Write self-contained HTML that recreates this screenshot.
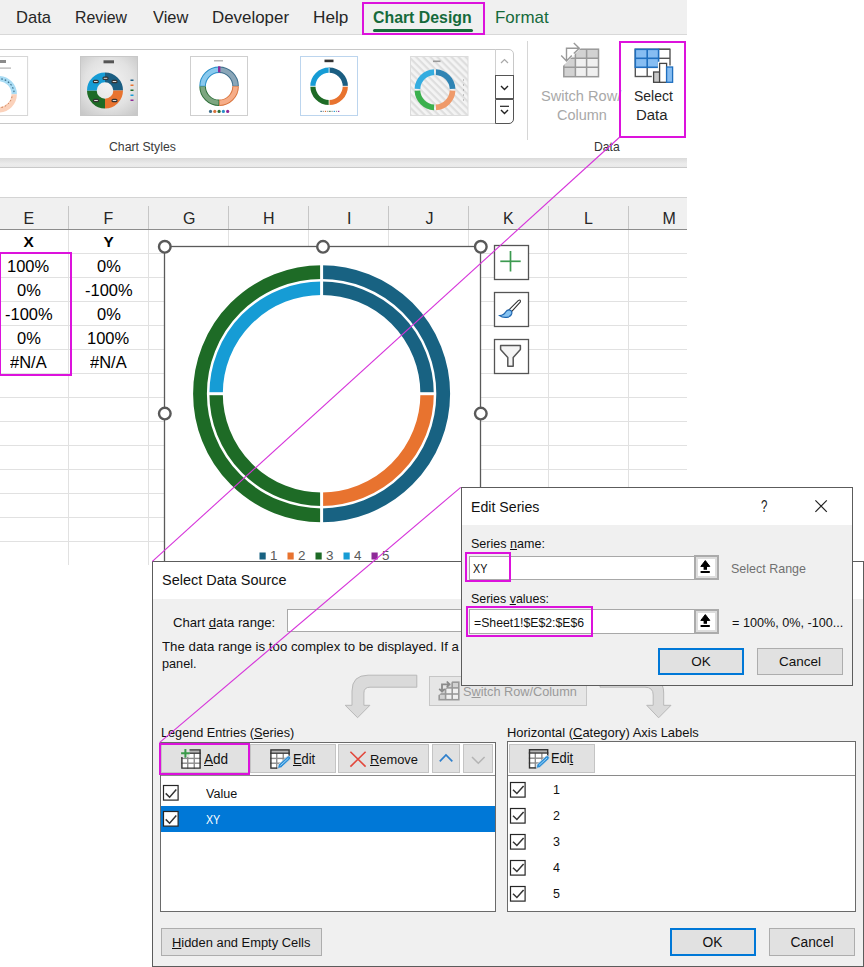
<!DOCTYPE html>
<html><head><meta charset="utf-8"><style>
html,body{margin:0;padding:0;}
body{width:864px;height:967px;overflow:hidden;position:relative;background:#fff;font-family:"Liberation Sans",sans-serif;}
.t{position:absolute;white-space:nowrap;transform-origin:0 0;}
u{text-decoration-thickness:1px;text-underline-offset:1px;}
</style></head><body>
<div style="position:absolute;left:0.00px;top:0.00px;width:687.00px;height:34.00px;background:#f0f0f0"></div>
<div style="position:absolute;left:0.00px;top:34.00px;width:687.00px;height:1.00px;background:#d8d8d8"></div>
<div class="t" style="left:15.53px;top:9.00px;font-size:17.006px;line-height:17.006px;font-weight:400;color:#262626;transform:scaleX(0.9731);">Data</div>
<div class="t" style="left:75.32px;top:9.00px;font-size:17.006px;line-height:17.006px;font-weight:400;color:#262626;transform:scaleX(0.9331);">Review</div>
<div class="t" style="left:153.00px;top:9.00px;font-size:17.006px;line-height:17.006px;font-weight:400;color:#262626;transform:scaleX(0.9661);">View</div>
<div class="t" style="left:212.31px;top:9.00px;font-size:17.006px;line-height:17.006px;font-weight:400;color:#262626;transform:scaleX(0.9944);">Developer</div>
<div class="t" style="left:313.39px;top:9.00px;font-size:17.006px;line-height:17.006px;font-weight:400;color:#262626;transform:scaleX(1.0117);">Help</div>
<div class="t" style="left:373.30px;top:9.00px;font-size:17.006px;line-height:17.006px;font-weight:700;color:#156a3b;transform:scaleX(0.9326);">Chart Design</div>
<div class="t" style="left:494.60px;top:9.00px;font-size:17.006px;line-height:17.006px;font-weight:400;color:#156a3b;transform:scaleX(0.9959);">Format</div>
<div style="position:absolute;left:372.80px;top:28.80px;width:100.60px;height:3.00px;background:#156a3b;border-radius:2px"></div>
<div style="position:absolute;left:0.00px;top:35.00px;width:687.00px;height:123.00px;background:#fff"></div>
<div style="position:absolute;left:-5.00px;top:49.00px;width:518.50px;height:75.00px;border:1px solid #c8c8c8;border-radius:0 5px 5px 0;box-sizing:border-box"></div>
<div style="position:absolute;left:495.00px;top:49.00px;width:1.00px;height:75.00px;background:#d0d0d0"></div>
<div style="position:absolute;left:495.00px;top:75.00px;width:18.50px;height:24.00px;border:1px solid #555;box-sizing:border-box;background:#fff"></div>
<div style="position:absolute;left:495.00px;top:98.50px;width:18.50px;height:25.50px;border:1px solid #555;border-radius:0 0 5px 0;box-sizing:border-box;background:#fff"></div>
<svg style="position:absolute;left:495px;top:49px" width="19" height="75">
<polyline points="6,14 9.5,10.5 13,14" fill="none" stroke="#a8a8a8" stroke-width="1.2"/>
<polyline points="6,37 9.5,40.5 13,37" fill="none" stroke="#222" stroke-width="1.4"/>
<line x1="5" y1="57.3" x2="14" y2="57.3" stroke="#222" stroke-width="1.2"/>
<polyline points="6,61 9.5,64.5 13,61" fill="none" stroke="#222" stroke-width="1.4"/>
</svg>
<svg style="position:absolute;left:0;top:0" width="864" height="160">
<defs>
<radialGradient id="g2" cx="50%" cy="45%" r="70%"><stop offset="0" stop-color="#f4f4f4"/><stop offset="0.6" stop-color="#e2e2e2"/><stop offset="1" stop-color="#c8c8c8"/></radialGradient>
<pattern id="hatch" width="5" height="5" patternUnits="userSpaceOnUse" patternTransform="rotate(45)"><rect width="5" height="5" fill="#f4f4f4"/><rect width="5" height="2.2" fill="#dedede"/></pattern>
</defs>
<rect x="-3" y="56.5" width="30.6" height="59" fill="#fff" stroke="#d6d6d6" stroke-width="1"/>
<path d="M-1.40,78.60 A15.6,15.6 0 0 1 14.20,94.20" fill="none" stroke="#a9dcf4" stroke-width="5.4" />
<path d="M14.20,94.20 A15.6,15.6 0 0 1 -1.40,109.80" fill="none" stroke="#fbd2bb" stroke-width="5.4" />
<path d="M1.31,78.84 A15.6,15.6 0 0 1 14.19,93.66" fill="none" stroke="#3a6f8c" stroke-width="1.2" stroke-dasharray="1.6 2"/>
<path d="M11.99,96.56 A13.6,13.6 0 0 1 0.96,107.59" fill="none" stroke="#c8794e" stroke-width="1" stroke-dasharray="1.6 2"/>
<rect x="0" y="60" width="6" height="3" fill="#8a8a8a"/>
<rect x="0" y="67.5" width="11" height="1.2" fill="#b0b0b0"/>
<rect x="80.5" y="56.5" width="57" height="59" fill="url(#g2)" stroke="#c8c8c8" stroke-width="1"/>
<path d="M105.00,77.35 A13.15,13.15 0 0 1 118.15,90.50" fill="none" stroke="#1b5e82" stroke-width="9.7" />
<path d="M118.15,90.50 A13.15,13.15 0 0 1 105.00,103.65" fill="none" stroke="#e8732f" stroke-width="9.7" />
<path d="M105.00,103.65 A13.15,13.15 0 0 1 91.85,90.50" fill="none" stroke="#1e6b26" stroke-width="9.7" />
<path d="M91.85,90.50 A13.15,13.15 0 0 1 105.00,77.35" fill="none" stroke="#169cd5" stroke-width="9.7" />
<rect x="102.5" y="76.5" width="6" height="3.6" rx="1.6" fill="#333"/><rect x="103.7" y="77.8" width="3.6" height="1" fill="#ddd"/>
<rect x="111.5" y="79.7" width="6" height="3.6" rx="1.6" fill="#333"/><rect x="112.7" y="81.0" width="3.6" height="1" fill="#ddd"/>
<rect x="92.8" y="79.7" width="6" height="3.6" rx="1.6" fill="#333"/><rect x="94.0" y="81.0" width="3.6" height="1" fill="#ddd"/>
<rect x="93" y="98.7" width="6" height="3.6" rx="1.6" fill="#333"/><rect x="94.2" y="100.0" width="3.6" height="1" fill="#ddd"/>
<rect x="111.5" y="98.7" width="6" height="3.6" rx="1.6" fill="#333"/><rect x="112.7" y="100.0" width="3.6" height="1" fill="#ddd"/>
<rect x="103.5" y="60.3" width="10.5" height="3" fill="#555"/>
<rect x="130.5" y="79.5" width="3" height="1.5" fill="#1b5e82"/>
<rect x="130.5" y="84.5" width="3" height="1.5" fill="#e8732f"/>
<rect x="130.5" y="89.5" width="3" height="1.5" fill="#1e6b26"/>
<rect x="130.5" y="94.5" width="3" height="1.5" fill="#169cd5"/>
<rect x="130.5" y="99.5" width="3" height="1.5" fill="#8e2a98"/>
<rect x="190.5" y="56.5" width="57" height="59" fill="#fff" stroke="#cfcfcf" stroke-width="1"/>
<path d="M219.10,69.80 A16.5,16.5 0 0 1 235.60,86.30" fill="none" stroke="#3f6f8c" stroke-width="6.6" />
<path d="M219.68,69.81 A16.5,16.5 0 0 1 235.59,85.72" fill="none" stroke="#8aa6b8" stroke-width="4.6" />
<path d="M235.60,86.30 A16.5,16.5 0 0 1 219.10,102.80" fill="none" stroke="#d8733c" stroke-width="6.6" />
<path d="M235.59,86.88 A16.5,16.5 0 0 1 219.68,102.79" fill="none" stroke="#f6ad88" stroke-width="4.6" />
<path d="M219.10,102.80 A16.5,16.5 0 0 1 202.60,86.30" fill="none" stroke="#2f6f3a" stroke-width="6.6" />
<path d="M218.52,102.79 A16.5,16.5 0 0 1 202.61,86.88" fill="none" stroke="#7da680" stroke-width="4.6" />
<path d="M202.60,86.30 A16.5,16.5 0 0 1 219.10,69.80" fill="none" stroke="#2a8fc8" stroke-width="6.6" />
<path d="M202.61,85.72 A16.5,16.5 0 0 1 218.52,69.81" fill="none" stroke="#89c9ee" stroke-width="4.6" />
<rect x="218" y="66.3" width="2.4" height="6" fill="#8e2a98"/>
<rect x="214" y="60" width="9" height="1.5" fill="#b8b8b8"/>
<circle cx="210.5" cy="111.4" r="1.6" fill="#3f6f8c"/>
<circle cx="214.8" cy="111.4" r="1.6" fill="#d8733c"/>
<circle cx="219.1" cy="111.4" r="1.6" fill="#2f6f3a"/>
<circle cx="223.4" cy="111.4" r="1.6" fill="#2a8fc8"/>
<circle cx="227.7" cy="111.4" r="1.6" fill="#8e2a98"/>
<rect x="300.5" y="56.5" width="57" height="59" fill="#fff" stroke="#bcd5ee" stroke-width="1"/>
<path d="M329.10,70.10 A16.2,16.2 0 0 1 345.30,86.30" fill="none" stroke="#1b5e82" stroke-width="5.2" />
<path d="M345.30,86.30 A16.2,16.2 0 0 1 329.10,102.50" fill="none" stroke="#e8732f" stroke-width="5.2" />
<path d="M329.10,102.50 A16.2,16.2 0 0 1 312.90,86.30" fill="none" stroke="#1e6b26" stroke-width="5.2" />
<path d="M312.90,86.30 A16.2,16.2 0 0 1 329.10,70.10" fill="none" stroke="#169cd5" stroke-width="5.2" />
<line x1="329.1" y1="68" x2="329.1" y2="105" stroke="#fff" stroke-width="0.8"/><line x1="310" y1="86.3" x2="348" y2="86.3" stroke="#fff" stroke-width="0.8"/>
<rect x="324.5" y="59.6" width="9" height="2.6" fill="#333"/>
<rect x="320.5" y="110.8" width="1.2" height="1.2" fill="#1b5e82"/>
<rect x="322.7" y="110.8" width="1.2" height="1.2" fill="#999"/>
<rect x="324.9" y="110.8" width="1.2" height="1.2" fill="#e8732f"/>
<rect x="327.1" y="110.8" width="1.2" height="1.2" fill="#999"/>
<rect x="329.3" y="110.8" width="1.2" height="1.2" fill="#1e6b26"/>
<rect x="331.5" y="110.8" width="1.2" height="1.2" fill="#999"/>
<rect x="333.7" y="110.8" width="1.2" height="1.2" fill="#169cd5"/>
<rect x="335.9" y="110.8" width="1.2" height="1.2" fill="#999"/>
<rect x="338.1" y="110.8" width="1.2" height="1.2" fill="#8e2a98"/>
<rect x="410.5" y="56.5" width="57.5" height="59" fill="url(#hatch)" stroke="#dcdcdc" stroke-width="1"/>
<path d="M435.92,72.22 A17.6,17.6 0 0 1 452.58,88.88" fill="none" stroke="#2f84b4" stroke-width="5.7" />
<path d="M452.58,90.72 A17.6,17.6 0 0 1 435.92,107.38" fill="none" stroke="#ef9a6a" stroke-width="5.7" />
<path d="M434.08,107.38 A17.6,17.6 0 0 1 417.42,90.72" fill="none" stroke="#3bb04d" stroke-width="5.7" />
<path d="M417.42,88.88 A17.6,17.6 0 0 1 434.08,72.22" fill="none" stroke="#35ade0" stroke-width="5.7" />
<rect x="433" y="60.5" width="7.5" height="1.6" fill="#999"/>
<rect x="463" y="79.5" width="0.8" height="1" fill="#777"/>
<rect x="463" y="84.5" width="0.8" height="1" fill="#777"/>
<rect x="463" y="89.5" width="0.8" height="1" fill="#777"/>
<rect x="463" y="94.5" width="0.8" height="1" fill="#777"/>
<rect x="463" y="99.5" width="0.8" height="1" fill="#777"/>
</svg>
<div style="position:absolute;left:527.30px;top:41.00px;width:1.00px;height:99.00px;background:#d6d6d6"></div>
<div class="t" style="left:108.50px;top:140.00px;font-size:13.663px;line-height:13.663px;font-weight:400;color:#3a3a3a;transform:scaleX(0.8988);">Chart Styles</div>
<div class="t" style="left:593.85px;top:141.00px;font-size:12.791px;line-height:12.791px;font-weight:400;color:#333;transform:scaleX(0.9520);">Data</div>
<div class="t" style="left:633.70px;top:89.00px;font-size:14.244px;line-height:14.244px;font-weight:400;color:#262626;transform:scaleX(0.9822);">Select</div>
<div class="t" style="left:636.35px;top:108.00px;font-size:14.244px;line-height:14.244px;font-weight:400;color:#262626;transform:scaleX(1.0497);">Data</div>
<div class="t" style="left:540.70px;top:89.00px;font-size:14.244px;line-height:14.244px;font-weight:400;color:#a8a8a8;transform:scaleX(1.0248);">Switch Row/</div>
<div class="t" style="left:556.90px;top:108.00px;font-size:14.244px;line-height:14.244px;font-weight:400;color:#a8a8a8;transform:scaleX(1.0180);">Column</div>
<div style="position:absolute;left:0.00px;top:158.00px;width:687.00px;height:10.00px;background:linear-gradient(#dadada,#ececec 60%,#e8e8e8)"></div>
<div style="position:absolute;left:0.00px;top:167.00px;width:687.00px;height:1.00px;background:#c9c9c9"></div>
<div style="position:absolute;left:0.00px;top:168.00px;width:687.00px;height:29.00px;background:#fff"></div>
<div style="position:absolute;left:0.00px;top:197.00px;width:687.00px;height:1.00px;background:#d4d4d4"></div>
<div style="position:absolute;left:0.00px;top:198.00px;width:687.00px;height:31.00px;background:#f0f0f0"></div>
<div style="position:absolute;left:0.00px;top:229.00px;width:687.00px;height:1.00px;background:#8c8c8c"></div>
<div style="position:absolute;left:68.00px;top:206.00px;width:1.00px;height:23.00px;background:#c6c6c6"></div>
<div style="position:absolute;left:148.00px;top:206.00px;width:1.00px;height:23.00px;background:#c6c6c6"></div>
<div style="position:absolute;left:228.00px;top:206.00px;width:1.00px;height:23.00px;background:#c6c6c6"></div>
<div style="position:absolute;left:308.00px;top:206.00px;width:1.00px;height:23.00px;background:#c6c6c6"></div>
<div style="position:absolute;left:388.00px;top:206.00px;width:1.00px;height:23.00px;background:#c6c6c6"></div>
<div style="position:absolute;left:468.00px;top:206.00px;width:1.00px;height:23.00px;background:#c6c6c6"></div>
<div style="position:absolute;left:548.00px;top:206.00px;width:1.00px;height:23.00px;background:#c6c6c6"></div>
<div style="position:absolute;left:628.00px;top:206.00px;width:1.00px;height:23.00px;background:#c6c6c6"></div>
<div class="t" style="left:23.50px;top:211.00px;font-size:15.988px;line-height:15.988px;font-weight:400;color:#262626;transform:scaleX(1.0000);">E</div>
<div class="t" style="left:103.50px;top:211.00px;font-size:15.988px;line-height:15.988px;font-weight:400;color:#262626;transform:scaleX(1.0000);">F</div>
<div class="t" style="left:183.00px;top:211.00px;font-size:15.988px;line-height:15.988px;font-weight:400;color:#262626;transform:scaleX(1.0000);">G</div>
<div class="t" style="left:263.00px;top:211.00px;font-size:15.988px;line-height:15.988px;font-weight:400;color:#262626;transform:scaleX(1.0000);">H</div>
<div class="t" style="left:347.00px;top:211.00px;font-size:15.988px;line-height:15.988px;font-weight:400;color:#262626;transform:scaleX(1.0000);">I</div>
<div class="t" style="left:425.50px;top:211.00px;font-size:15.988px;line-height:15.988px;font-weight:400;color:#262626;transform:scaleX(1.0000);">J</div>
<div class="t" style="left:503.00px;top:211.00px;font-size:15.988px;line-height:15.988px;font-weight:400;color:#262626;transform:scaleX(1.0000);">K</div>
<div class="t" style="left:584.00px;top:211.00px;font-size:15.988px;line-height:15.988px;font-weight:400;color:#262626;transform:scaleX(1.0000);">L</div>
<div class="t" style="left:662.50px;top:211.00px;font-size:15.988px;line-height:15.988px;font-weight:400;color:#262626;transform:scaleX(1.0000);">M</div>
<div style="position:absolute;left:0.00px;top:253.00px;width:687.00px;height:1.00px;background:#e1e1e1"></div>
<div style="position:absolute;left:0.00px;top:277.00px;width:687.00px;height:1.00px;background:#e1e1e1"></div>
<div style="position:absolute;left:0.00px;top:301.00px;width:687.00px;height:1.00px;background:#e1e1e1"></div>
<div style="position:absolute;left:0.00px;top:325.00px;width:687.00px;height:1.00px;background:#e1e1e1"></div>
<div style="position:absolute;left:0.00px;top:349.00px;width:687.00px;height:1.00px;background:#e1e1e1"></div>
<div style="position:absolute;left:0.00px;top:373.00px;width:687.00px;height:1.00px;background:#e1e1e1"></div>
<div style="position:absolute;left:0.00px;top:397.00px;width:687.00px;height:1.00px;background:#e1e1e1"></div>
<div style="position:absolute;left:0.00px;top:421.00px;width:687.00px;height:1.00px;background:#e1e1e1"></div>
<div style="position:absolute;left:0.00px;top:445.00px;width:687.00px;height:1.00px;background:#e1e1e1"></div>
<div style="position:absolute;left:0.00px;top:469.00px;width:687.00px;height:1.00px;background:#e1e1e1"></div>
<div style="position:absolute;left:0.00px;top:493.00px;width:687.00px;height:1.00px;background:#e1e1e1"></div>
<div style="position:absolute;left:0.00px;top:517.00px;width:687.00px;height:1.00px;background:#e1e1e1"></div>
<div style="position:absolute;left:0.00px;top:541.00px;width:687.00px;height:1.00px;background:#e1e1e1"></div>
<div style="position:absolute;left:68.00px;top:230.00px;width:1.00px;height:334.50px;background:#e1e1e1"></div>
<div style="position:absolute;left:148.00px;top:230.00px;width:1.00px;height:334.50px;background:#e1e1e1"></div>
<div style="position:absolute;left:228.00px;top:230.00px;width:1.00px;height:334.50px;background:#e1e1e1"></div>
<div style="position:absolute;left:308.00px;top:230.00px;width:1.00px;height:334.50px;background:#e1e1e1"></div>
<div style="position:absolute;left:388.00px;top:230.00px;width:1.00px;height:334.50px;background:#e1e1e1"></div>
<div style="position:absolute;left:468.00px;top:230.00px;width:1.00px;height:334.50px;background:#e1e1e1"></div>
<div style="position:absolute;left:548.00px;top:230.00px;width:1.00px;height:334.50px;background:#e1e1e1"></div>
<div style="position:absolute;left:628.00px;top:230.00px;width:1.00px;height:334.50px;background:#e1e1e1"></div>
<div class="t" style="left:23.40px;top:234.00px;font-size:15.407px;line-height:15.407px;font-weight:700;color:#000;transform:scaleX(1.0000);">X</div>
<div class="t" style="left:103.50px;top:234.00px;font-size:15.407px;line-height:15.407px;font-weight:700;color:#000;transform:scaleX(1.0000);">Y</div>
<div class="t" style="left:7.28px;top:259.00px;font-size:15.698px;line-height:15.698px;font-weight:400;color:#000;transform:scaleX(1.0500);">100%</div>
<div class="t" style="left:96.67px;top:259.00px;font-size:15.698px;line-height:15.698px;font-weight:400;color:#000;transform:scaleX(1.0500);">0%</div>
<div class="t" style="left:16.97px;top:283.00px;font-size:15.698px;line-height:15.698px;font-weight:400;color:#000;transform:scaleX(1.0500);">0%</div>
<div class="t" style="left:84.77px;top:283.00px;font-size:15.698px;line-height:15.698px;font-weight:400;color:#000;transform:scaleX(1.0500);">-100%</div>
<div class="t" style="left:5.07px;top:307.00px;font-size:15.698px;line-height:15.698px;font-weight:400;color:#000;transform:scaleX(1.0500);">-100%</div>
<div class="t" style="left:96.67px;top:307.00px;font-size:15.698px;line-height:15.698px;font-weight:400;color:#000;transform:scaleX(1.0500);">0%</div>
<div class="t" style="left:16.97px;top:331.00px;font-size:15.698px;line-height:15.698px;font-weight:400;color:#000;transform:scaleX(1.0500);">0%</div>
<div class="t" style="left:86.98px;top:331.00px;font-size:15.698px;line-height:15.698px;font-weight:400;color:#000;transform:scaleX(1.0500);">100%</div>
<div class="t" style="left:10.31px;top:355.00px;font-size:15.698px;line-height:15.698px;font-weight:400;color:#000;transform:scaleX(1.0500);">#N/A</div>
<div class="t" style="left:90.01px;top:355.00px;font-size:15.698px;line-height:15.698px;font-weight:400;color:#000;transform:scaleX(1.0500);">#N/A</div>
<div style="position:absolute;left:0.00px;top:251.80px;width:72.40px;height:124.40px;border:2.2px solid #dc12dc;border-left-width:1.4px;box-sizing:border-box"></div>
<svg style="position:absolute;left:0;top:0" width="864" height="967">
<rect x="164.5" y="246.5" width="316" height="334" fill="#fff" stroke="#5a5a5a" stroke-width="1.3"/>
<path d="M321.60,272.10 A121.6,121.6 0 0 1 321.60,515.30" fill="none" stroke="#186282" stroke-width="13.8"/>
<path d="M321.60,515.30 A121.6,121.6 0 0 1 321.60,272.10" fill="none" stroke="#1e6b26" stroke-width="13.8"/>
<path d="M321.60,288.20 A105.5,105.5 0 0 1 427.10,393.70" fill="none" stroke="#186282" stroke-width="13.4"/>
<path d="M427.10,393.70 A105.5,105.5 0 0 1 321.60,499.20" fill="none" stroke="#e8732f" stroke-width="13.4"/>
<path d="M321.60,499.20 A105.5,105.5 0 0 1 216.10,393.70" fill="none" stroke="#1e6b26" stroke-width="13.4"/>
<path d="M216.10,393.70 A105.5,105.5 0 0 1 321.60,288.20" fill="none" stroke="#169cd5" stroke-width="13.4"/>
<line x1="321.6" y1="261.7" x2="321.6" y2="525.7" stroke="#fff" stroke-width="3"/>
<line x1="208.10000000000002" y1="393.7" x2="224.60000000000002" y2="393.7" stroke="#fff" stroke-width="3"/>
<line x1="418.6" y1="393.7" x2="435.1" y2="393.7" stroke="#fff" stroke-width="3"/>
<circle cx="164.8" cy="246.8" r="5.8" fill="#fff" stroke="#595959" stroke-width="2.4"/>
<circle cx="323.0" cy="246.85" r="5.8" fill="#fff" stroke="#595959" stroke-width="2.4"/>
<circle cx="480.8" cy="246.8" r="5.8" fill="#fff" stroke="#595959" stroke-width="2.4"/>
<circle cx="164.8" cy="413.6" r="5.8" fill="#fff" stroke="#595959" stroke-width="2.4"/>
<circle cx="480.8" cy="413.6" r="5.8" fill="#fff" stroke="#595959" stroke-width="2.4"/>
<rect x="494.5" y="245.5" width="34" height="34" fill="#fff" stroke="#555" stroke-width="1.3"/>
<rect x="494.5" y="292.5" width="34" height="34" fill="#fff" stroke="#555" stroke-width="1.3"/>
<rect x="494.5" y="339.5" width="34" height="34" fill="#fff" stroke="#555" stroke-width="1.3"/>
<line x1="500.3" y1="261.3" x2="520.7" y2="261.3" stroke="#3c9a50" stroke-width="1.7"/>
<line x1="510.5" y1="251" x2="510.5" y2="271.5" stroke="#3c9a50" stroke-width="1.7"/>
<path d="M508.9,309.9 L518.2,300.6 Q520.8,299 520.4,301.9 L511.6,311.6 Z" fill="#fff" stroke="#333" stroke-width="1.1" stroke-linejoin="round"/>
<path d="M499.6,315.6 Q503.8,315.4 505.6,312 Q507.2,309.6 509.6,309.9 Q512.3,310.7 511.8,313.4 Q511,316.8 506.6,317.4 Q502.2,317.8 499.6,315.6 Z" fill="#86c3f2" stroke="#1f66b0" stroke-width="1.2"/>
<path d="M500.6,345.6 L520.4,345.6 L520.4,349.6 L513.2,357.6 L513.2,366.3 L507.8,366.3 L507.8,357.6 L500.6,349.6 Z" fill="#f4f4f4" stroke="#555" stroke-width="1.5" stroke-linejoin="round"/>
<rect x="259.50" y="552.5" width="6.2" height="7" fill="#186282"/>
<rect x="287.50" y="552.5" width="6.2" height="7" fill="#e8732f"/>
<rect x="315.50" y="552.5" width="6.2" height="7" fill="#1e6b26"/>
<rect x="343.50" y="552.5" width="6.2" height="7" fill="#169cd5"/>
<rect x="371.50" y="552.5" width="6.2" height="7" fill="#8e2a98"/>
</svg>
<div class="t" style="left:269.95px;top:550.00px;font-size:12.209px;line-height:12.209px;font-weight:400;color:#595959;transform:scaleX(1.1000);">1</div>
<div class="t" style="left:297.95px;top:550.00px;font-size:12.209px;line-height:12.209px;font-weight:400;color:#595959;transform:scaleX(1.1000);">2</div>
<div class="t" style="left:325.95px;top:550.00px;font-size:12.209px;line-height:12.209px;font-weight:400;color:#595959;transform:scaleX(1.1000);">3</div>
<div class="t" style="left:353.95px;top:550.00px;font-size:12.209px;line-height:12.209px;font-weight:400;color:#595959;transform:scaleX(1.1000);">4</div>
<div class="t" style="left:381.95px;top:550.00px;font-size:12.209px;line-height:12.209px;font-weight:400;color:#595959;transform:scaleX(1.1000);">5</div>
<div style="position:absolute;left:152.00px;top:561.00px;width:712.00px;height:406.00px;background:#f0f0f0;border:1px solid #5c5c5c;box-sizing:border-box"></div>
<div style="position:absolute;left:153.00px;top:562.00px;width:710.00px;height:37.00px;background:#fff"></div>
<div class="t" style="left:162.20px;top:572.00px;font-size:15.262px;line-height:15.262px;font-weight:400;color:#111;transform:scaleX(0.9480);">Select Data Source</div>
<div class="t" style="left:173.30px;top:616.00px;font-size:13.517px;line-height:13.517px;font-weight:400;color:#111;transform:scaleX(0.9730);">Chart <u>d</u>ata range:</div>
<div style="position:absolute;left:287.00px;top:608.70px;width:413.00px;height:23.80px;background:#fff;border:1px solid #a8a8a8;box-sizing:border-box"></div>
<div class="t" style="left:161.80px;top:640.00px;font-size:13.517px;line-height:13.517px;font-weight:400;color:#111;transform:scaleX(0.9818);">The data range is too complex to be displayed. If a</div>
<div class="t" style="left:161.80px;top:657.00px;font-size:13.517px;line-height:13.517px;font-weight:400;color:#111;transform:scaleX(0.9381);">panel.</div>
<svg style="position:absolute;left:0;top:0" width="864" height="967">
<path d="M416.8,675.2 L368,675.2 Q352,675.2 352,691 L352,705.3 L345.2,705.3 L357.6,717.7 L369.9,705.3 L363.9,705.3 L363.9,693 Q363.9,687.2 370,687.2 L416.8,687.2 Z" fill="#dadada" stroke="#b8b8b8" stroke-width="1"/>
<path d="M600,675.2 L640,675.2 Q663.7,675.2 663.7,693 L663.7,705.3 L671,705.3 L658.6,717.8 L646.7,705.3 L653.2,705.3 L653.2,695 Q653.2,687.2 645,687.2 L600,687.2 Z" fill="#dadada" stroke="#b8b8b8" stroke-width="1"/>
</svg>
<div style="position:absolute;left:429.00px;top:676.00px;width:157.50px;height:29.50px;background:#e6e6e6;border:1px solid #c6c6c6;box-sizing:border-box"></div>
<div class="t" style="left:462.50px;top:685.00px;font-size:13.517px;line-height:13.517px;font-weight:400;color:#9a9a9a;transform:scaleX(0.9420);">S<u>w</u>itch Row/Column</div>
<div class="t" style="left:160.55px;top:726.00px;font-size:13.372px;line-height:13.372px;font-weight:400;color:#111;transform:scaleX(0.9489);">Legend Entries (<u>S</u>eries)</div>
<div class="t" style="left:507.33px;top:726.00px;font-size:13.372px;line-height:13.372px;font-weight:400;color:#111;transform:scaleX(0.9672);">Horizontal (<u>C</u>ategory) Axis Labels</div>
<div style="position:absolute;left:160.00px;top:742.00px;width:336.00px;height:170.00px;background:#fff;border:1px solid #6a6a6a;box-sizing:border-box"></div>
<div style="position:absolute;left:161.00px;top:743.00px;width:334.00px;height:32.00px;background:#fff"></div>
<div style="position:absolute;left:161.00px;top:775.00px;width:334.00px;height:1.00px;background:#8a8a8a"></div>
<div style="position:absolute;left:161.40px;top:744.40px;width:87.80px;height:29.10px;background:#e1e1e1;border:1px solid #c4c4c4;box-sizing:border-box"></div>
<div style="position:absolute;left:250.30px;top:744.40px;width:85.30px;height:29.10px;background:#e1e1e1;border:1px solid #c4c4c4;box-sizing:border-box"></div>
<div style="position:absolute;left:338.30px;top:744.40px;width:90.45px;height:29.10px;background:#e1e1e1;border:1px solid #c4c4c4;box-sizing:border-box"></div>
<div style="position:absolute;left:431.50px;top:744.40px;width:28.70px;height:29.10px;background:#e1e1e1;border:1px solid #c4c4c4;box-sizing:border-box"></div>
<div style="position:absolute;left:463.30px;top:744.40px;width:29.70px;height:29.10px;background:#e1e1e1;border:1px solid #c4c4c4;box-sizing:border-box"></div>
<div class="t" style="left:204.30px;top:753.00px;font-size:13.808px;line-height:13.808px;font-weight:400;color:#111;transform:scaleX(0.9843);"><u>A</u>dd</div>
<div class="t" style="left:292.87px;top:753.00px;font-size:13.808px;line-height:13.808px;font-weight:400;color:#111;transform:scaleX(0.9328);"><u>E</u>dit</div>
<div class="t" style="left:370.05px;top:753.00px;font-size:13.517px;line-height:13.517px;font-weight:400;color:#111;transform:scaleX(0.9536);"><u>R</u>emove</div>
<div style="position:absolute;left:161.00px;top:806.00px;width:334.00px;height:25.60px;background:#0078d7"></div>
<div class="t" style="left:206.20px;top:788.00px;font-size:12.500px;line-height:12.500px;font-weight:400;color:#111;transform:scaleX(1.0067);">Value</div>
<div class="t" style="left:206.20px;top:814.00px;font-size:12.500px;line-height:12.500px;font-weight:400;color:#fff;transform:scaleX(0.8536);">XY</div>
<div style="position:absolute;left:507.00px;top:741.40px;width:349.00px;height:170.60px;background:#fff;border:1px solid #6a6a6a;box-sizing:border-box"></div>
<div style="position:absolute;left:508.00px;top:742.40px;width:347.00px;height:32.60px;background:#fff"></div>
<div style="position:absolute;left:508.00px;top:775.00px;width:347.00px;height:1.00px;background:#8a8a8a"></div>
<div style="position:absolute;left:509.30px;top:744.20px;width:85.30px;height:28.90px;background:#e1e1e1;border:1px solid #c4c4c4;box-sizing:border-box"></div>
<div class="t" style="left:551.47px;top:752.00px;font-size:13.808px;line-height:13.808px;font-weight:400;color:#111;transform:scaleX(0.9328);">Edi<u>t</u></div>
<div class="t" style="left:553.00px;top:784.00px;font-size:12.500px;line-height:12.500px;font-weight:400;color:#111;transform:scaleX(1.0000);">1</div>
<div class="t" style="left:553.00px;top:810.00px;font-size:12.500px;line-height:12.500px;font-weight:400;color:#111;transform:scaleX(1.0000);">2</div>
<div class="t" style="left:553.00px;top:836.00px;font-size:12.500px;line-height:12.500px;font-weight:400;color:#111;transform:scaleX(1.0000);">3</div>
<div class="t" style="left:553.00px;top:862.00px;font-size:12.500px;line-height:12.500px;font-weight:400;color:#111;transform:scaleX(1.0000);">4</div>
<div class="t" style="left:553.00px;top:888.00px;font-size:12.500px;line-height:12.500px;font-weight:400;color:#111;transform:scaleX(1.0000);">5</div>
<div style="position:absolute;left:161.20px;top:928.20px;width:160.80px;height:27.40px;background:#e1e1e1;border:1px solid #adadad;box-sizing:border-box"></div>
<div class="t" style="left:172.02px;top:936.00px;font-size:13.227px;line-height:13.227px;font-weight:400;color:#111;transform:scaleX(0.9760);"><u>H</u>idden and Empty Cells</div>
<div style="position:absolute;left:670.00px;top:928.20px;width:85.80px;height:27.40px;background:#e1e1e1;border:2px solid #0078d7;box-sizing:border-box"></div>
<div class="t" style="left:702.53px;top:936.00px;font-size:13.808px;line-height:13.808px;font-weight:400;color:#111;transform:scaleX(1.0000);">OK</div>
<div style="position:absolute;left:769.00px;top:928.20px;width:86.00px;height:27.40px;background:#e1e1e1;border:1px solid #adadad;box-sizing:border-box"></div>
<div class="t" style="left:790.56px;top:936.00px;font-size:13.808px;line-height:13.808px;font-weight:400;color:#111;transform:scaleX(1.0000);">Cancel</div>
<svg style="position:absolute;left:0;top:0" width="864" height="967">
<rect x="163.5" y="785.5" width="14.6" height="14.6" fill="#fff" stroke="#262626" stroke-width="1.2"/>
<polyline points="165.7,793.4000000000001 169.6,797.2 176.29999999999998,789.6" fill="none" stroke="#333" stroke-width="1.5"/>
<rect x="163.5" y="811.5" width="14.6" height="14.6" fill="#fff" stroke="#262626" stroke-width="1.2"/>
<polyline points="165.7,819.4000000000001 169.6,823.2 176.29999999999998,815.6" fill="none" stroke="#333" stroke-width="1.5"/>
<rect x="510.5" y="782.5" width="14.6" height="14.6" fill="#fff" stroke="#262626" stroke-width="1.2"/>
<polyline points="513.0,789.7 516.9,793.5 523.6,785.9" fill="none" stroke="#333" stroke-width="1.5"/>
<rect x="510.5" y="808.5" width="14.6" height="14.6" fill="#fff" stroke="#262626" stroke-width="1.2"/>
<polyline points="513.0,815.7 516.9,819.5 523.6,811.9" fill="none" stroke="#333" stroke-width="1.5"/>
<rect x="510.5" y="834.5" width="14.6" height="14.6" fill="#fff" stroke="#262626" stroke-width="1.2"/>
<polyline points="513.0,841.7 516.9,845.5 523.6,837.9" fill="none" stroke="#333" stroke-width="1.5"/>
<rect x="510.5" y="860.5" width="14.6" height="14.6" fill="#fff" stroke="#262626" stroke-width="1.2"/>
<polyline points="513.0,867.7 516.9,871.5 523.6,863.9" fill="none" stroke="#333" stroke-width="1.5"/>
<rect x="510.5" y="886.5" width="14.6" height="14.6" fill="#fff" stroke="#262626" stroke-width="1.2"/>
<polyline points="513.0,893.7 516.9,897.5 523.6,889.9" fill="none" stroke="#333" stroke-width="1.5"/>
</svg>
<div style="position:absolute;left:461.00px;top:487.00px;width:391.50px;height:199.00px;background:#f0f0f0;border:1px solid #5c5c5c;box-sizing:border-box"></div>
<div style="position:absolute;left:462.00px;top:488.00px;width:389.50px;height:37.00px;background:#fff"></div>
<div class="t" style="left:471.08px;top:499.00px;font-size:15.407px;line-height:15.407px;font-weight:400;color:#111;transform:scaleX(0.9196);">Edit Series</div>
<div class="t" style="left:761.00px;top:498.00px;font-size:16.424px;line-height:16.424px;font-weight:400;color:#222;transform:scaleX(0.7000);">?</div>
<svg style="position:absolute;left:0;top:0" width="864" height="967"><path d="M815.4,500.4 L826.8,511.8 M826.8,500.4 L815.4,511.8" stroke="#222" stroke-width="1.2"/></svg>
<div class="t" style="left:470.70px;top:538.00px;font-size:12.936px;line-height:12.936px;font-weight:400;color:#111;transform:scaleX(0.9703);">Series <u>n</u>ame:</div>
<div style="position:absolute;left:469.30px;top:555.50px;width:225.70px;height:24.00px;background:#fff;border:1px solid #a8a8a8;box-sizing:border-box"></div>
<div class="t" style="left:473.10px;top:563.00px;font-size:12.500px;line-height:12.500px;font-weight:400;color:#111;transform:scaleX(0.8594);">XY</div>
<div class="t" style="left:731.10px;top:562.00px;font-size:13.517px;line-height:13.517px;font-weight:400;color:#707070;transform:scaleX(0.9250);">Select Range</div>
<div class="t" style="left:470.50px;top:593.00px;font-size:12.936px;line-height:12.936px;font-weight:400;color:#111;transform:scaleX(0.9619);">Series <u>v</u>alues:</div>
<div style="position:absolute;left:469.30px;top:609.40px;width:225.70px;height:24.20px;background:#fff;border:1px solid #a8a8a8;box-sizing:border-box"></div>
<div class="t" style="left:473.50px;top:616.00px;font-size:13.081px;line-height:13.081px;font-weight:400;color:#111;transform:scaleX(0.9380);">=Sheet1!$E$2:$E$6</div>
<div class="t" style="left:732.00px;top:616.00px;font-size:13.081px;line-height:13.081px;font-weight:400;color:#111;transform:scaleX(0.9660);">= 100%, 0%, -100...</div>
<div style="position:absolute;left:658.00px;top:647.60px;width:85.80px;height:27.00px;background:#e1e1e1;border:2px solid #0078d7;box-sizing:border-box"></div>
<div class="t" style="left:691.25px;top:655.00px;font-size:13.517px;line-height:13.517px;font-weight:400;color:#111;transform:scaleX(1.0000);">OK</div>
<div style="position:absolute;left:757.20px;top:647.60px;width:85.60px;height:27.00px;background:#e1e1e1;border:1px solid #adadad;box-sizing:border-box"></div>
<div class="t" style="left:778.99px;top:655.00px;font-size:13.517px;line-height:13.517px;font-weight:400;color:#111;transform:scaleX(1.0000);">Cancel</div>
<div style="position:absolute;left:694.20px;top:555.00px;width:24.70px;height:24.60px;background:#fff;border:2px solid #ababab;box-sizing:border-box"></div>
<div style="position:absolute;left:696.20px;top:557.00px;width:20.70px;height:20.60px;border:2px solid #dddddd;box-sizing:border-box"></div>
<svg style="position:absolute;left:694.4px;top:555px" width="25" height="25"><path d="M6.8,11.4 L11.3,5.6 L15.8,11.4 Z" fill="#000" stroke="#000" stroke-width="1" stroke-linejoin="round"/><rect x="9.6" y="9" width="3.4" height="5.8" fill="#000"/><rect x="6.6" y="16" width="9.2" height="2" fill="#000"/></svg>
<div style="position:absolute;left:694.20px;top:609.40px;width:24.70px;height:24.60px;background:#fff;border:2px solid #ababab;box-sizing:border-box"></div>
<div style="position:absolute;left:696.20px;top:611.40px;width:20.70px;height:20.60px;border:2px solid #dddddd;box-sizing:border-box"></div>
<svg style="position:absolute;left:694.4px;top:609.4px" width="25" height="25"><path d="M6.8,11.4 L11.3,5.6 L15.8,11.4 Z" fill="#000" stroke="#000" stroke-width="1" stroke-linejoin="round"/><rect x="9.6" y="9" width="3.4" height="5.8" fill="#000"/><rect x="6.6" y="16" width="9.2" height="2" fill="#000"/></svg>
<svg style="position:absolute;left:0;top:0" width="864" height="967">
<rect x="181.79999999999998" y="753.2" width="18.400000000000023" height="14.99999999999991" fill="#fff"/>
<rect x="181.79999999999998" y="749.8000000000001" width="18.400000000000023" height="4.0" fill="#b4b4b4"/>
<line x1="187.73" y1="753.2" x2="187.73" y2="768.8" stroke="#8c8c8c" stroke-width="1.4"/>
<line x1="194.27" y1="753.2" x2="194.27" y2="768.8" stroke="#8c8c8c" stroke-width="1.4"/>
<line x1="181.2" y1="758.40" x2="200.8" y2="758.40" stroke="#8c8c8c" stroke-width="1.4"/>
<line x1="181.2" y1="763.20" x2="200.8" y2="763.20" stroke="#8c8c8c" stroke-width="1.4"/>
<line x1="181.2" y1="753.20" x2="200.8" y2="753.20" stroke="#333" stroke-width="1.2"/>
<path d="M188.2,749.9000000000001 L200.10000000000002,749.9000000000001 L200.10000000000002,768.0999999999999 L181.89999999999998,768.0999999999999 L181.89999999999998,756.2" fill="none" stroke="#333" stroke-width="1.4"/>
<rect x="179.5" y="746" width="10" height="11" fill="#e1e1e1"/>
<path d="M181.1,753.3 L189.8,753.3 M185.4,749 L185.4,757.7" stroke="#3a9a4a" stroke-width="2"/>
<rect x="270.8" y="753.2" width="18.400000000000023" height="15.000000000000023" fill="#fff"/>
<rect x="270.8" y="749.8000000000001" width="18.400000000000023" height="4.0" fill="#b4b4b4"/>
<line x1="276.73" y1="753.2" x2="276.73" y2="768.8000000000001" stroke="#8c8c8c" stroke-width="1.4"/>
<line x1="283.27" y1="753.2" x2="283.27" y2="768.8000000000001" stroke="#8c8c8c" stroke-width="1.4"/>
<line x1="270.2" y1="758.40" x2="289.8" y2="758.40" stroke="#8c8c8c" stroke-width="1.4"/>
<line x1="270.2" y1="763.20" x2="289.8" y2="763.20" stroke="#8c8c8c" stroke-width="1.4"/>
<line x1="270.2" y1="753.20" x2="289.8" y2="753.20" stroke="#333" stroke-width="1.2"/>
<rect x="270.9" y="749.9000000000001" width="18.200000000000024" height="18.200000000000024" fill="none" stroke="#333" stroke-width="1.4"/>
<path d="M276.7,770.2 L291.2,770.2 L291.2,756.0 Z" fill="#e1e1e1"/>
<path d="M277.59999999999997,768.6 L281.22999999999996,767.74 L290.03,759.5400000000001 A2.1,2.1 0 0 0 287.16999999999996,756.46 L278.37,764.6600000000001 Z" fill="#2f8fd6" stroke="#e1e1e1" stroke-width="0.8"/>
<line x1="280.4" y1="765.6" x2="288.4" y2="758.2" stroke="#a6dcff" stroke-width="0.9"/>
<rect x="529.4" y="753.0" width="18.400000000000023" height="15.000000000000023" fill="#fff"/>
<rect x="529.4" y="749.6" width="18.400000000000023" height="4.0" fill="#b4b4b4"/>
<line x1="535.33" y1="753.0" x2="535.33" y2="768.6" stroke="#8c8c8c" stroke-width="1.4"/>
<line x1="541.87" y1="753.0" x2="541.87" y2="768.6" stroke="#8c8c8c" stroke-width="1.4"/>
<line x1="528.8" y1="758.20" x2="548.4" y2="758.20" stroke="#8c8c8c" stroke-width="1.4"/>
<line x1="528.8" y1="763.00" x2="548.4" y2="763.00" stroke="#8c8c8c" stroke-width="1.4"/>
<line x1="528.8" y1="753.00" x2="548.4" y2="753.00" stroke="#333" stroke-width="1.2"/>
<rect x="529.5" y="749.7" width="18.200000000000024" height="18.200000000000024" fill="none" stroke="#333" stroke-width="1.4"/>
<path d="M535.3,770.0 L549.8,770.0 L549.8,755.8 Z" fill="#e1e1e1"/>
<path d="M536.1999999999999,768.4 L539.8299999999999,767.54 L548.63,759.34 A2.1,2.1 0 0 0 545.77,756.26 L536.9699999999999,764.46 Z" fill="#2f8fd6" stroke="#e1e1e1" stroke-width="0.8"/>
<line x1="539.0" y1="765.4" x2="547.0" y2="758.0" stroke="#a6dcff" stroke-width="0.9"/>
<path d="M350.4,751.8 L365.6,766.6 M365.6,751.8 L350.4,766.6" stroke="#e2483c" stroke-width="1.6"/>
<polyline points="439.8,761.3 446,755 452.3,761.3" fill="none" stroke="#2d7fcc" stroke-width="1.7"/>
<polyline points="472,757 478.3,763.3 484.6,757" fill="none" stroke="#b4b4b4" stroke-width="1.5"/>
<rect x="635.3" y="49.3" width="34.700000000000045" height="27.200000000000003" fill="#fff" stroke="#555" stroke-width="1.4"/>
<line x1="647.2" y1="67.3" x2="647.2" y2="76.5" stroke="#555" stroke-width="1.4"/>
<line x1="658.6" y1="49.3" x2="670" y2="49.3" stroke="#555" stroke-width="1.4"/>
<line x1="658.6" y1="58.3" x2="670" y2="58.3" stroke="#555" stroke-width="1.4"/>
<rect x="635.3" y="49.3" width="23.300000000000068" height="18.0" fill="#86bdf2" stroke="#1f6fbf" stroke-width="1.6"/>
<line x1="647.2" y1="49.3" x2="647.2" y2="67.3" stroke="#1f6fbf" stroke-width="1.6"/>
<line x1="635.3" y1="58.3" x2="658.6" y2="58.3" stroke="#1f6fbf" stroke-width="1.6"/>
<path d="M651.8,84 L651.8,70.5 L657.9,70.5 L657.9,61.8 L665,61.8 L665,65.4 L674.4,65.4 L674.4,84 Z" fill="#fff"/>
<rect x="653.6" y="72" width="6" height="10.3" fill="#c8c8c8" stroke="#444" stroke-width="1.3"/>
<rect x="659.6" y="63.4" width="7" height="18.9" fill="#fff" stroke="#444" stroke-width="1.3"/>
<rect x="666.6" y="67" width="6" height="15.3" fill="#86bdf2" stroke="#1f6fbf" stroke-width="1.3"/>
<rect x="563.8" y="49.2" width="34.700000000000045" height="27.5" fill="#f0f0f0"/>
<rect x="575.4" y="49.2" width="23.100000000000023" height="9.099999999999994" fill="#d2d2d2"/>
<rect x="563.8" y="58.3" width="11.600000000000023" height="18.400000000000006" fill="#d2d2d2"/>
<rect x="563.8" y="49.2" width="34.700000000000045" height="27.5" fill="none" stroke="#999" stroke-width="1.5"/>
<line x1="575.4" y1="49.2" x2="575.4" y2="76.7" stroke="#999" stroke-width="1.5"/>
<line x1="586.6" y1="49.2" x2="586.6" y2="76.7" stroke="#999" stroke-width="1.5"/>
<line x1="563.8" y1="58.3" x2="598.5" y2="58.3" stroke="#999" stroke-width="1.5"/>
<line x1="563.8" y1="67.2" x2="598.5" y2="67.2" stroke="#999" stroke-width="1.5"/>
<path d="M560,40 L586.5,40 L560,66.5 Z" fill="#fff"/><path d="M585,42 L561,66" stroke="#fff" stroke-width="2.6"/><path d="M566.5,61 L566.5,48.3 L579.3,48.3 M573.8,43 L579.3,48.3 L573.8,53.6 M561.2,55.6 L566.5,61 L571.8,55.6" fill="none" stroke="#999" stroke-width="1.4"/>
<rect x="439.2" y="682.2" width="19.600000000000023" height="17.5" fill="#f0f0f0"/>
<rect x="445.6" y="682.2" width="13.199999999999989" height="5.699999999999932" fill="#d2d2d2"/>
<rect x="439.2" y="687.9" width="6.400000000000034" height="11.800000000000068" fill="#d2d2d2"/>
<rect x="439.2" y="682.2" width="19.600000000000023" height="17.5" fill="none" stroke="#999" stroke-width="1.6"/>
<line x1="445.6" y1="682.2" x2="445.6" y2="699.7" stroke="#999" stroke-width="1.6"/>
<line x1="452.2" y1="682.2" x2="452.2" y2="699.7" stroke="#999" stroke-width="1.6"/>
<line x1="439.2" y1="687.9" x2="458.8" y2="687.9" stroke="#999" stroke-width="1.6"/>
<line x1="439.2" y1="694" x2="458.8" y2="694" stroke="#999" stroke-width="1.6"/>
<path d="M452,680 L437,695 L437,680 Z" fill="#e6e6e6"/><path d="M451.5,681 L438,694.5" stroke="#e6e6e6" stroke-width="2.2"/><path d="M442,691.5 L442,684.3 L449.5,684.3 M446.8,681.5 L449.5,684.3 L446.8,687 M439.2,688.8 L442,691.5 L444.8,688.8" fill="none" stroke="#8a8a8a" stroke-width="1.8"/>
</svg>
<div style="position:absolute;left:619.20px;top:40.80px;width:67.00px;height:97.00px;border:2px solid #dc12dc;box-sizing:border-box"></div>
<div style="position:absolute;left:362.00px;top:2.00px;width:123.00px;height:32.60px;border:2px solid #dc12dc;box-sizing:border-box"></div>
<div style="position:absolute;left:465.40px;top:552.40px;width:45.40px;height:29.70px;border:2.5px solid #dc12dc;box-sizing:border-box"></div>
<div style="position:absolute;left:465.80px;top:606.30px;width:126.80px;height:31.10px;border:2.5px solid #dc12dc;box-sizing:border-box"></div>
<div style="position:absolute;left:159.20px;top:742.80px;width:90.60px;height:31.80px;border:2.5px solid #dc12dc;box-sizing:border-box"></div>
<svg style="position:absolute;left:0;top:0" width="864" height="967"><line x1="619.8" y1="137" x2="152.4" y2="561.4" stroke="#d634da" stroke-width="1.1"/><line x1="460.7" y1="487.4" x2="159.5" y2="742.6" stroke="#d634da" stroke-width="1.1"/></svg>
</body></html>
